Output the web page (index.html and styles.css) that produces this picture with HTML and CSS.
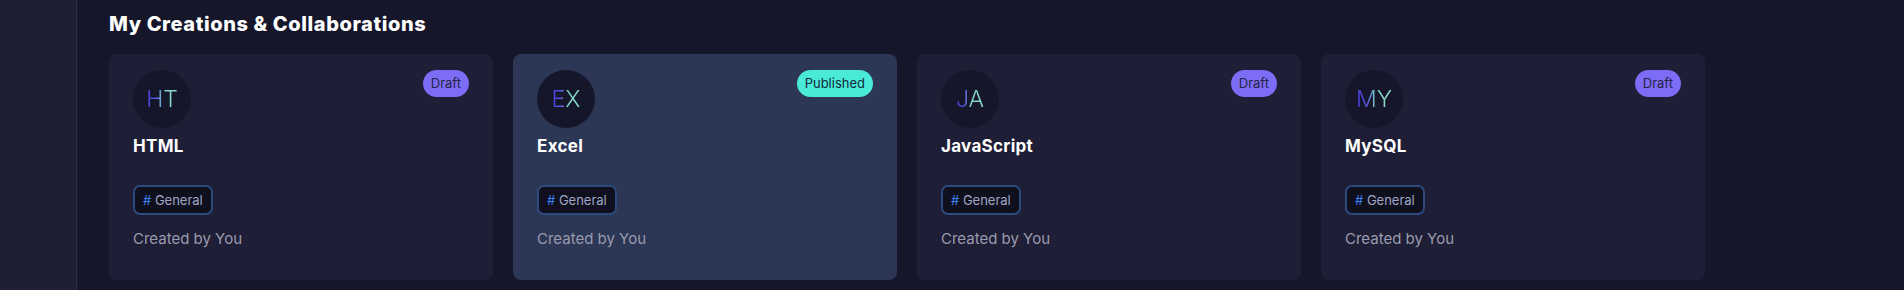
FILE: index.html
```html
<!DOCTYPE html>
<html lang="en">
<head>
    <meta charset="UTF-8">
    <meta name="viewport" content="width=device-width, initial-scale=1.0">
    <title>My Creations</title>
    <link rel="stylesheet" href="styles.css">
</head>
<body>
    <aside class="sidebar"></aside>

    <main class="main">
        <h2 class="section-title">My Creations &amp; Collaborations</h2>

        <div class="card-grid">
            <div class="card">
                <span class="status draft">Draft</span>
                <div class="avatar"><span>HT</span></div>
                <h3 class="card-title">HTML</h3>
                <div class="tag"><span class="hash">#</span> General</div>
                <p class="owner">Created by You</p>
            </div>

            <div class="card active">
                <span class="status published">Published</span>
                <div class="avatar"><span>EX</span></div>
                <h3 class="card-title">Excel</h3>
                <div class="tag"><span class="hash">#</span> General</div>
                <p class="owner">Created by You</p>
            </div>

            <div class="card">
                <span class="status draft">Draft</span>
                <div class="avatar"><span>JA</span></div>
                <h3 class="card-title">JavaScript</h3>
                <div class="tag"><span class="hash">#</span> General</div>
                <p class="owner">Created by You</p>
            </div>

            <div class="card">
                <span class="status draft">Draft</span>
                <div class="avatar"><span>MY</span></div>
                <h3 class="card-title">MySQL</h3>
                <div class="tag"><span class="hash">#</span> General</div>
                <p class="owner">Created by You</p>
            </div>
        </div>
    </main>
</body>
</html>
```

FILE: styles.css
```css
:root {
    --bg: #16162b;
    --sidebar: #1e1e35;
    --card: #1e1e36;
    --card-active: #2c3655;
    --avatar: #16162a;
    --text: #ffffff;
    --muted: #9a9aae;
    --violet: #7c6cf6;
    --teal: #4aead9;
    --tag-border: #2b4a7e;
    --tag-bg: #0f0f1e;
}

* {
    margin: 0;
    padding: 0;
    box-sizing: border-box;
}

body {
    background: var(--bg);
    color: var(--text);
    font-family: 'Inter', 'Noto Sans', sans-serif;
    display: flex;
    min-height: 100vh;
}

.sidebar {
    width: 77px;
    flex-shrink: 0;
    background: var(--sidebar);
    border-right: 1px solid #2a3052;
}

.main {
    flex: 1;
    padding: 10px 32px 0;
}

.section-title {
    font-size: 20px;
    line-height: 28px;
    font-weight: 800;
    letter-spacing: 0.6px;
    margin-bottom: 16px;
}

.card-grid {
    display: grid;
    grid-template-columns: repeat(4, 384px);
    gap: 20px;
}

.card {
    position: relative;
    background: var(--card);
    border-radius: 8px;
    padding: 16px 24px 31px;
}

.card.active {
    background: var(--card-active);
}

.status {
    position: absolute;
    top: 16px;
    right: 24px;
    font-size: 13px;
    line-height: 19px;
    padding: 4px 8px;
    border-radius: 14px;
    color: #262444;
}

.status.draft {
    background: var(--violet);
}

.status.published {
    background: var(--teal);
    color: #14283a;
}

.avatar {
    width: 58px;
    height: 58px;
    border-radius: 50%;
    background: var(--avatar);
    display: flex;
    align-items: center;
    justify-content: center;
}

.avatar span {
    display: inline-block;
    font-size: 23px;
    line-height: 28px;
    font-weight: 300;
    background: linear-gradient(90deg, #4a3fe0 0%, #5553e2 30%, #7fd6c8 55%, #8ee3cc 100%);
    -webkit-background-clip: text;
    background-clip: text;
    color: transparent;
}

.card-title {
    margin-top: 6px;
    font-size: 17px;
    line-height: 24px;
    font-weight: 700;
    letter-spacing: 0.3px;
}

.tag {
    display: inline-block;
    margin-top: 27px;
    padding: 4px 8px;
    border: 2px solid var(--tag-border);
    border-radius: 7px;
    background: var(--tag-bg);
    font-size: 13px;
    line-height: 18px;
    color: #a0a6c4;
}

.tag .hash {
    color: #3b82f6;
}

.owner {
    margin-top: 14px;
    font-size: 15px;
    line-height: 20px;
    color: var(--muted);
}
```
